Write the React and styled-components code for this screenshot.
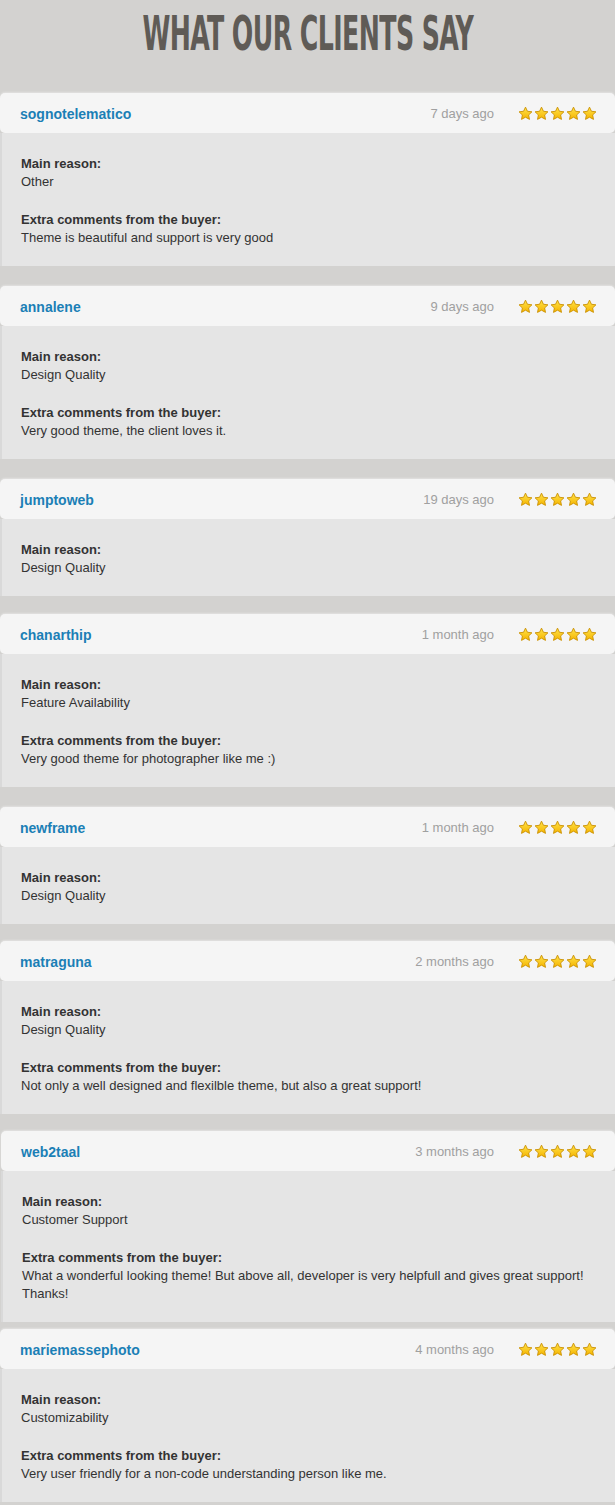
import React from 'react';
import styled, { createGlobalStyle } from 'styled-components';

const GlobalStyle = createGlobalStyle`
  html, body {
    margin: 0;
    padding: 0;
    background: #d3d2d0;
  }
  body {
    font-family: 'Liberation Sans', Arial, sans-serif;
    -webkit-font-smoothing: antialiased;
  }
`;

const Page = styled.div`
  width: 615px;
  min-height: 1505px;
  background: #d3d2d0;
  overflow: hidden;
`;

const Heading = styled.div`
  height: 93px;
  display: flex;
  justify-content: center;
  align-items: flex-start;
`;

const Title = styled.h1`
  margin: 7px 0 0;
  font-family: 'DejaVu Sans Condensed', 'DejaVu Sans', sans-serif;
  font-stretch: condensed;
  font-weight: 700;
  font-size: 48px;
  line-height: 52px;
  color: #5f5b56;
  text-transform: uppercase;
  letter-spacing: -1px;
  white-space: nowrap;
  transform: scaleX(0.585);
`;

const List = styled.div`
  display: flex;
  flex-direction: column;
`;

const Card = styled.article`
  margin-top: ${props => props.gap}px;
  margin-left: ${props => props.shift || 0}px;
`;

const CardHeader = styled.header`
  height: 40px;
  box-sizing: border-box;
  padding: 0 18px 0 20px;
  display: flex;
  align-items: center;
  background: #f5f5f5;
  border-radius: 5px;
  box-shadow: 0 -1px 2px rgba(255, 255, 255, 0.35);
`;

const User = styled.span`
  flex: 1;
  font-size: 14px;
  font-weight: 700;
  color: #1b7fb6;
  padding-top: 1px;
`;

const When = styled.span`
  font-size: 13px;
  color: #a0a0a0;
  margin-right: 24px;
`;

const Stars = styled.div`
  display: flex;
  gap: 1px;
`;

const Body = styled.div`
  background: #e5e5e5;
  border-left: 2px solid #d9d9d9;
  padding: 22px 20px 19px 19px;
  display: flex;
  flex-direction: column;
  gap: 20px;
`;

const Field = styled.div`
  font-size: 13px;
  line-height: 18px;
  color: #333;
`;

const Label = styled.div`
  font-weight: 700;
`;

const Star = () => (
  <svg width="15" height="15" viewBox="0 0 24 24">
    <defs>
      <linearGradient id="sg" x1="0" y1="0" x2="0" y2="1">
        <stop offset="0" stopColor="#ffe34a" />
        <stop offset="1" stopColor="#f5b400" />
      </linearGradient>
    </defs>
    <path
      d="M12 1.8l3.1 6.6 7.2.9-5.3 5 1.4 7.1L12 17.9l-6.4 3.5L7 14.3l-5.3-5 7.2-.9z"
      fill="url(#sg)"
      stroke="#c98f00"
      strokeWidth="1.4"
      strokeLinejoin="round"
    />
  </svg>
);

const reviews = [
  { user: 'sognotelematico', when: '7 days ago', gap: 0, reason: 'Other', comment: 'Theme is beautiful and support is very good' },
  { user: 'annalene', when: '9 days ago', gap: 20, reason: 'Design Quality', comment: 'Very good theme, the client loves it.' },
  { user: 'jumptoweb', when: '19 days ago', gap: 20, reason: 'Design Quality' },
  { user: 'chanarthip', when: '1 month ago', gap: 18, reason: 'Feature Availability', comment: 'Very good theme for photographer like me :)' },
  { user: 'newframe', when: '1 month ago', gap: 20, reason: 'Design Quality' },
  { user: 'matraguna', when: '2 months ago', gap: 17, reason: 'Design Quality', comment: 'Not only a well designed and flexilble theme, but also a great support!' },
  { user: 'web2taal', when: '3 months ago', gap: 17, shift: 1, reason: 'Customer Support', comment: 'What a wonderful looking theme! But above all, developer is very helpfull and gives great support! Thanks!' },
  { user: 'mariemassephoto', when: '4 months ago', gap: 7, reason: 'Customizability', comment: 'Very user friendly for a non-code understanding person like me.' },
];

export default function App() {
  return (
    <Page>
      <GlobalStyle />
      <Heading>
        <Title>What our clients say</Title>
      </Heading>
      <List>
        {reviews.map(r => (
          <Card key={r.user} gap={r.gap} shift={r.shift}>
            <CardHeader>
              <User>{r.user}</User>
              <When>{r.when}</When>
              <Stars>
                {[0, 1, 2, 3, 4].map(i => <Star key={i} />)}
              </Stars>
            </CardHeader>
            <Body>
              <Field>
                <Label>Main reason:</Label>
                {r.reason}
              </Field>
              {r.comment && (
                <Field>
                  <Label>Extra comments from the buyer:</Label>
                  {r.comment}
                </Field>
              )}
            </Body>
          </Card>
        ))}
      </List>
    </Page>
  );
}
